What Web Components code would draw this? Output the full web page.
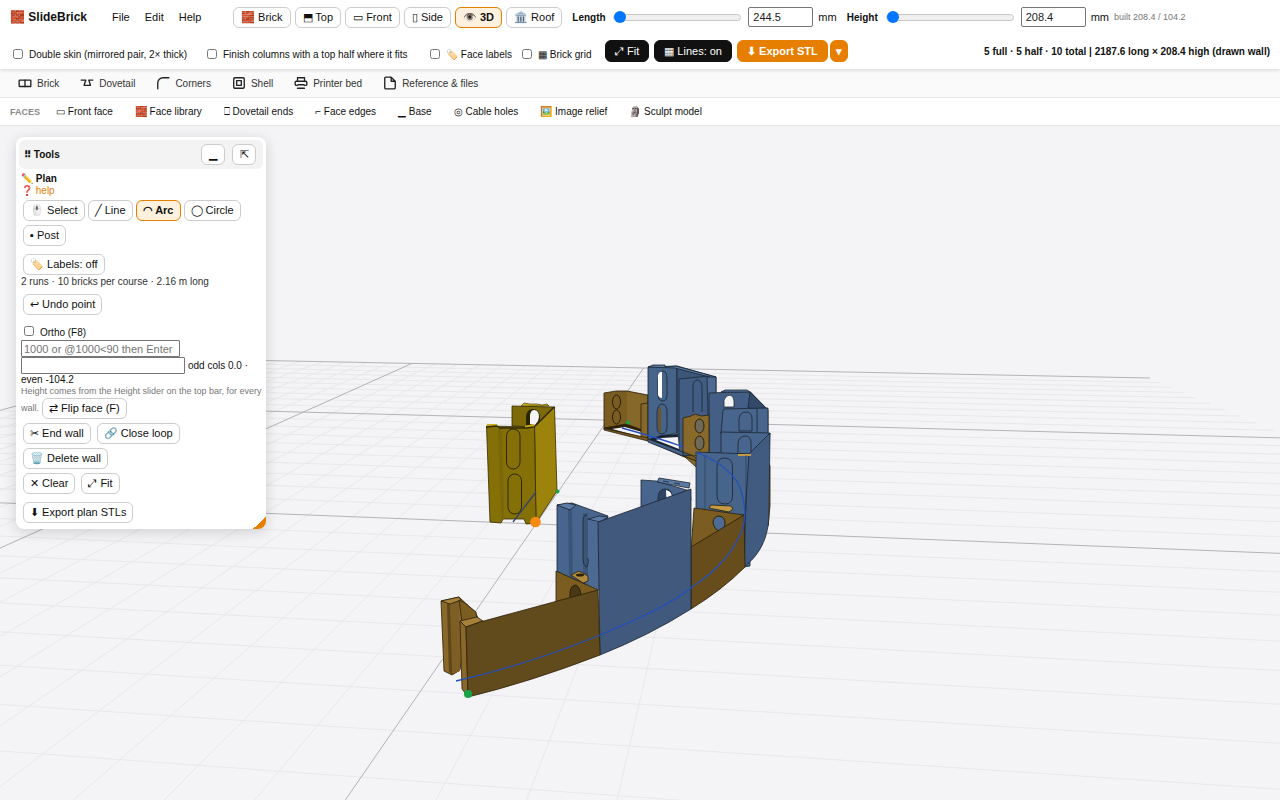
<!DOCTYPE html>
<html lang="en">
<head>
<meta charset="utf-8">
<title>SlideBrick</title>
<style>
  html, body { height: 100%; }
  body {
    margin: 0;
    font-family: "Liberation Sans", Arial, sans-serif;
    font-size: 10px;
    color: #111;
    background: #f4f4f6;
  }
</style>
</head>
<body>
<sb-app></sb-app>

<script>
const define = (name, html, setup) => {
  const template = document.createElement('template');
  template.innerHTML = html;
  customElements.define(name, class extends HTMLElement {
    constructor() {
      super();
      this.attachShadow({ mode: 'open' }).append(template.content.cloneNode(true));
    }
    connectedCallback() { if (setup) setup(this, this.shadowRoot); }
  });
};

/* Push button. Variants: active, dark, primary. */
define('sb-button', `
  <style>
    :host { display: inline-flex; flex: none; }
    button {
      font: inherit; font-size: 11px; line-height: 13px; color: #111;
      margin: 0; padding: 3px var(--button-pad, 7px); height: 21px;
      border: 1px solid #ccc; border-radius: 6px; background: #fff; white-space: pre;
      width: 100%;
    }
    :host([active]) button { border-color: #e67e00; background: #fff1de; font-weight: bold; }
    :host([dark]) button { height: 22px; padding: 3px 9px; border-color: #111; background: #111; color: #fff; }
    :host([primary]) button { height: 22px; padding: 3px 9px; border-color: #e67e00; background: #e67e00; color: #fff; font-weight: bold; }
    :host([slim]) button { padding: 3px 5px; }
  </style>
  <button type="button"><slot></slot></button>`);

/* Tick box with its label. */
define('sb-check', `
  <style>
    :host { display: inline-flex; flex: none; }
    label { display: flex; align-items: center; gap: 6px; line-height: 12px; white-space: pre; }
    input { width: 10px; height: 10px; margin: 0 0 3px; }
  </style>
  <label><input type="checkbox"><span><slot></slot></span></label>`);

/* Slider with a number box beside it. */
define('sb-measure', `
  <style>
    :host { display: flex; align-items: center; flex: none; }
    label { font-weight: bold; width: var(--label-width, 34px); }
    .range {
      appearance: none; -webkit-appearance: none; width: 128px; height: 12px;
      margin: 0 7px; background: none;
    }
    .range::-webkit-slider-runnable-track {
      height: 7px; box-sizing: border-box; border: 1px solid #c6c6c6; border-radius: 4px; background: #efefef;
    }
    .range::-webkit-slider-thumb {
      -webkit-appearance: none; width: 12px; height: 12px; margin-top: -4px;
      border-radius: 50%; background: #0075ff;
    }
    .value {
      font: inherit; font-size: 11px; color: #222; box-sizing: border-box;
      width: 65px; height: 20px; padding: 0 4px; margin: 0 5px 0 0;
      border: 1px solid #767676; border-radius: 2px; background: #fff;
    }
    .unit { font-size: 11px; }
  </style>
  <label for="range"></label>
  <input class="range" id="range" type="range" min="0" max="100" value="0">
  <input class="value" type="text">
  <span class="unit">mm</span>`,
  (host, root) => {
    const name = host.getAttribute('label');
    root.querySelector('label').textContent = name;
    root.querySelector('.value').value = host.getAttribute('value');
    root.querySelector('.value').setAttribute('aria-label', name + ' in mm');
  });

define('sb-topbar', `
  <style>
    :host {
      display: block; position: relative; z-index: 2; background: #fff;
      padding: 6px 10px 7px; box-shadow: 0 1px 4px rgba(0,0,0,.15);
    }
    .row { display: flex; align-items: center; }
    .row + .row { margin-top: 12px; }
    h1 { margin: 0; font-size: 12px; line-height: 22px; width: 102px; white-space: pre; }
    nav { display: flex; gap: 15px; width: 121px; font-size: 11px; }
    nav a { color: inherit; text-decoration: none; }
    .views { display: flex; gap: 4px; margin-right: 10px; }
    .built { margin-left: 5px; font-size: 9px; color: #777; }
    sb-measure + sb-measure { margin-left: 10px; }
    .checks { display: flex; margin: 8px 12px 0 3px; }
    .actions { display: flex; gap: 5px; }
    .split { display: flex; gap: 2px; }
    output { margin-left: auto; font-weight: bold; }
    .skin { width: 194px; } .finish { width: 223px; } .labels { width: 92px; } .grid { width: 71px; }
  </style>
  <div class="row">
    <h1>🧱 SlideBrick</h1>
    <nav><a href="#file">File</a><a href="#edit">Edit</a><a href="#help">Help</a></nav>
    <div class="views">
      <sb-button>🧱 Brick</sb-button>
      <sb-button>⬒ Top</sb-button>
      <sb-button>▭ Front</sb-button>
      <sb-button>▯ Side</sb-button>
      <sb-button active>👁️ 3D</sb-button>
      <sb-button>🏛️ Roof</sb-button>
    </div>
    <sb-measure label="Length" value="244.5"></sb-measure>
    <sb-measure label="Height" value="208.4" style="--label-width: 32px"></sb-measure>
    <span class="built">built 208.4 / 104.2</span>
  </div>
  <div class="row">
    <div class="checks">
      <sb-check class="skin">Double skin (mirrored pair, 2× thick)</sb-check>
      <sb-check class="finish">Finish columns with a top half where it fits</sb-check>
      <sb-check class="labels">🏷️ Face labels</sb-check>
      <sb-check class="grid">▦ Brick grid</sb-check>
    </div>
    <div class="actions">
      <sb-button dark>⤢ Fit</sb-button>
      <sb-button dark>▦ Lines: on</sb-button>
      <div class="split">
        <sb-button primary>⬇ Export STL</sb-button>
        <sb-button primary slim>▾</sb-button>
      </div>
    </div>
    <output>5 full · 5 half · 10 total | 2187.6 long × 208.4 high (drawn wall)</output>
  </div>`);

define('sb-tabs', `
  <style>
    :host { display: block; background: #fafafa; border-bottom: 1px solid #e6e6e6; }
    nav { display: flex; align-items: center; gap: 21px; height: 28px; padding: 0 18px; }
    a { display: flex; align-items: center; gap: 5px; color: #333; text-decoration: none; }
    svg { width: 14px; height: 14px; fill: none; stroke: #222; stroke-width: 2.3; stroke-linecap: round; stroke-linejoin: round; }
  </style>
  <nav>
    <a href="#brick"><svg viewBox="0 0 24 24"><rect x="2" y="7" width="20" height="11" rx="1"/><path d="M12 7v11"/></svg>Brick</a>
    <a href="#dovetail"><svg viewBox="0 0 24 24"><path d="M2 7h8l-3 9h6M22 7h-7l3 9h-5M2 7h3"/></svg>Dovetail</a>
    <a href="#corners"><svg viewBox="0 0 24 24"><path d="M3 22V12a9 9 0 0 1 9-9h10"/></svg>Corners</a>
    <a href="#shell"><svg viewBox="0 0 24 24"><rect x="3" y="3" width="18" height="18" rx="2"/><rect x="8" y="8" width="8" height="8"/></svg>Shell</a>
    <a href="#printer"><svg viewBox="0 0 24 24"><path d="M6 9V3h12v6M6 16H4a2 2 0 0 1-2-2v-3a2 2 0 0 1 2-2h16a2 2 0 0 1 2 2v3a2 2 0 0 1-2 2h-2M7 15h10M6 21h12"/></svg>Printer bed</a>
    <a href="#reference"><svg viewBox="0 0 24 24"><path d="M14 2H5a2 2 0 0 0-2 2v16a2 2 0 0 0 2 2h14a2 2 0 0 0 2-2V9zM14 2v7h7"/></svg>Reference &amp; files</a>
  </nav>`);

define('sb-faces', `
  <style>
    :host { display: block; background: #fff; border-bottom: 1px solid #e6e6e6; }
    nav { display: flex; align-items: center; gap: 22px; height: 27px; padding: 0 10px; }
    b { color: #888; font-size: 9px; margin-right: -6px; }
    a { color: #111; text-decoration: none; white-space: pre; }
  </style>
  <nav>
    <b>FACES</b>
    <a href="#front">▭ Front face</a>
    <a href="#library">🧱 Face library</a>
    <a href="#ends">⎕ Dovetail ends</a>
    <a href="#edges">⌐ Face edges</a>
    <a href="#base">▁ Base</a>
    <a href="#cable">◎ Cable holes</a>
    <a href="#relief">🖼️ Image relief</a>
    <a href="#sculpt">🗿 Sculpt model</a>
  </nav>`);

define('sb-tools', `
  <style>
    :host {
      display: block; box-sizing: border-box; width: 250px; padding: 3px 3px 6px; position: relative;
      background: #fff; border-radius: 8px; box-shadow: 0 3px 14px rgba(0,0,0,.15);
      --button-pad: 6px;
    }
    header { display: flex; align-items: center; gap: 7px; height: 29px; padding: 0 7px 0 5px; background: #f3f3f3; border-radius: 6px; }
    h2 { margin: 0 auto 0 0; font-size: 10px; }
    header sb-button { width: 24px; }
    .body { padding: 4px 2px 0; line-height: 11px; }
    h3 { margin: 0; font-size: 10px; line-height: 12px; }
    .help { color: #e67e00; text-decoration: none; display: block; line-height: 11px; }
    .row { display: flex; flex-wrap: wrap; gap: 4px 3px; padding: 0 2px; margin-top: 4px; }
    .wide { gap: 4px 6px; }
    .apart { margin-top: 8px; }
    .stat { margin: 1px 0 6px; line-height: 12px; color: #333; }
    .ortho { padding: 0 3px; margin: 11px 0 1px; display: flex; }
    .entry {
      display: block; box-sizing: border-box; font: inherit; font-size: 11px; line-height: 13px;
      height: 17px; width: 159px; padding: 0 2px; margin: 0; border: 1px solid #767676; border-radius: 1px; background: #fff;
    }
    .entry::placeholder { color: #757575; }
    .offset { display: flex; align-items: center; gap: 3px; }
    .offset .entry { width: 164px; }
    .even { line-height: 12px; }
    .note { margin: 0; font-size: 9px; line-height: 11px; color: #777; white-space: nowrap; }
    .flip { display: flex; align-items: center; gap: 3px; margin-top: 1px; font-size: 9px; color: #777; }
    .grip {
      position: absolute; right: 0; bottom: 0; width: 13px; height: 13px; border-bottom-right-radius: 8px;
      background: linear-gradient(135deg, transparent 50%, #e67e00 50%);
    }
  </style>
  <header>
    <h2>⠿ Tools</h2>
    <sb-button>▁</sb-button>
    <sb-button>⇱</sb-button>
  </header>
  <div class="body">
    <h3>✏️ Plan</h3>
    <a class="help" href="#help">❓ help</a>
    <div class="row">
      <sb-button>🖱️ Select</sb-button>
      <sb-button>╱ Line</sb-button>
      <sb-button active>◠ Arc</sb-button>
      <sb-button>◯ Circle</sb-button>
      <sb-button>▪ Post</sb-button>
    </div>
    <div class="row apart"><sb-button>🏷️ Labels: off</sb-button></div>
    <p class="stat">2 runs · 10 bricks per course · 2.16 m long</p>
    <div class="row"><sb-button>↩ Undo point</sb-button></div>
    <div class="ortho"><sb-check>Ortho (F8)</sb-check></div>
    <input class="entry" type="text" aria-label="Length and angle" placeholder="1000 or @1000&lt;90 then Enter">
    <div class="offset"><input class="entry" id="offset" type="text"><label for="offset">odd cols 0.0 ·</label></div>
    <div class="even">even -104.2</div>
    <p class="note">Height comes from the Height slider on the top bar, for every</p>
    <div class="flip">wall. <sb-button>⇄ Flip face (F)</sb-button></div>
    <div class="row wide">
      <sb-button>✂ End wall</sb-button>
      <sb-button>🔗 Close loop</sb-button>
    </div>
    <div class="row"><sb-button>🗑️ Delete wall</sb-button></div>
    <div class="row wide">
      <sb-button>✕ Clear</sb-button>
      <sb-button>⤢ Fit</sb-button>
    </div>
    <div class="row apart"><sb-button>⬇ Export plan STLs</sb-button></div>
  </div>
  <div class="grip"></div>`);

/* 3D view: ground grid in perspective, with the curved wall on it. */
define('sb-scene', `
  <style>
    :host { display: block; overflow: hidden; background: #f4f4f6; }
    svg { display: block; width: 100%; height: 100%; }
    .minor { stroke: #e8e8eb; fill: none; }
    .major { stroke: #b3b3b8; fill: none; }
    .e { stroke: #1b2430; stroke-width: .8; stroke-linejoin: round; }
    .n { stroke: #1b2430; stroke-width: .8; fill: none; }
    .y { stroke: #332b00; stroke-width: .8; }
    .o { stroke: #2a1f08; stroke-width: .8; }
  </style>
  <svg viewBox="0 126 1280 674" preserveAspectRatio="xMidYMid slice" role="img" aria-label="Curved wall in 3D">
    <g class="ground"></g>

    <!-- yellow brick -->
    <g stroke-linejoin="round">
      <path class="y" fill="#7d6a08" d="M512 406L555 407 536 427 512 426z"/>
      <path fill="#2c2600" d="M526 425V416q1-7 7-7 6 0 7 7v5l-4 5z"/>
      <path fill="#f4f4f6" d="M530 424V415q1-5 4-5 5 0 5 7l-1 4-3 4z"/>
      <path fill="#c9ae1b" stroke="#332b00" stroke-width=".6" d="M521 406l3-3 6 1h7l5 1 5-1 2 2z"/>
      <path class="y" fill="#9c830c" d="M534.500 427L554.500 407 557 491 536 523z"/>
      <path class="y" fill="#857008" d="M486.500 426L534.500 427 536 523 526 524 524 519 503 519 501 523 490 522z"/>
      <path fill="#7a6707" d="M498 427h4l2 92h-3z"/>
      <path fill="#c9ae1b" d="M487 424h10v3h-10zM525 426l8-2 3 2-3 2h-8z"/>
      <path fill="none" stroke="#332b00" stroke-width="1.300" d="M486 427l11-1 3 2h26l8-1 20-20"/>
      <g fill="none" stroke="#2c2600"><rect x="506.500" y="429" width="13.500" height="40" rx="6.700"/><rect x="508" y="474" width="13.500" height="40" rx="6.700"/></g>
      <path stroke="#33406e" stroke-width="1.300" d="M513 522L536 492"/>
    </g>

    <!-- far end of the wall -->
    <g>
      <path class="o" fill="#7b5d22" d="M604 393L616 391 627 391 648 395V438L625 426 604 429z"/>
      <path fill="#86682a" d="M627 392l20 4v37l-20-9z"/>
      <path class="o" fill="#2b210c" d="M604 428l22-4 22 8v8z"/>
      <path fill="#f4f4f6" d="M612 429l13-2 17 5v5z"/>
      <path class="o" fill="#86682a" d="M641 404l7-1v37l-7-2z"/>
      <path class="o" fill="#7b5d22" d="M604 428.500L648 438 683 452 698 458 700 463 682 456 648 441 604 430z"/>
      <g fill="none" stroke="#2a1f08"><ellipse cx="616.500" cy="402" rx="4" ry="7"/><ellipse cx="616.500" cy="417" rx="4" ry="7"/></g>
      <path class="e" fill="#46638a" d="M648 367L677 366V433L648 440z"/>
      <path class="e" fill="#3c567a" d="M677 366L716 377V452L683 456 677 433z"/>
      <path class="e" fill="#5b7ba5" d="M648 367l5-2h12v2l11-1 40 11-3 1-38-10z"/>
      <path class="e" fill="#425d83" d="M679 379l30-3v40l-28 38-2-4z"/>
      <path class="e" fill="#4c6a92" d="M707 377h9v70h-7z"/>
      <path class="n" d="M693 412v-25q0-7 4-7 5 0 5 7v25"/>
      <path class="n" d="M658 380q1-9 5-9 4 0 4 9v14q0 7-4 7-5 0-5-7zM657 412q1-8 5-8 5 0 5 8v14q0 8-5 8-5 0-5-8z"/>
      <path fill="#fff" d="M658 375q2-4 4-3v26q-3 0-4-3z"/>
      <path fill="#6d542a" d="M658 411q2-5 3-5v27q-3-1-3-6z"/>
      <path fill="#1b2430" d="M649 439l13-4 15-1 2 4v14z"/>
      <path fill="#f4f4f6" d="M656 440l6-2 16-1 1 12z"/>
      <path class="e" fill="#46638a" d="M648 439l35 13v4l-35-14z"/>
      <path class="e" fill="#435f86" d="M709 393L750 391.500 768 410V440L709 455z"/>
      <path class="e" fill="#33496a" d="M750 392l18 18-20-2z"/>
      <path class="e" fill="#5b7ba5" d="M721 392l4-2h22l3 2z"/>
      <path class="e" fill="#f4f4f6" d="M724 407V400q2-5 6-5 4 1 4 6v6z"/>
      <path class="e" fill="#48658d" d="M723 410l1-1 44-1v26h-47z"/>
      <path class="n" d="M739 431v-12q1-7 7-7 6 0 6 7v12zM757 409v24"/>
      <path class="e" fill="#48658d" d="M721 432l49 1-2 23h-47z"/>
      <path class="n" d="M738 454v-11q1-7 7-7 6 0 6 7v11z"/>
      <path class="o" fill="#8a6a2b" d="M683 418l8-2 4-2 6 2 8-1v37l-15 4-11-4z"/>
      <g stroke="#2a1f08" fill="#6d6a5a"><ellipse cx="699.500" cy="426" rx="4.500" ry="7"/><ellipse cx="699.500" cy="443" rx="4.500" ry="7"/></g>
      <path class="o" fill="#86682a" d="M684 456l24 10-12 1z"/>
      <path fill="#86682a" stroke="#5a431a" d="M769 464l1 2v40l-2 20z"/>
      <path class="e" fill="#47648b" d="M696 452L751 454 750 566 744 567 696 540z"/>
      <path class="e" fill="#405a80" d="M749 454L770 433 769 512C769 540 758 556 744 567L746 500z"/>
      <path fill="#c49b45" d="M738 454h13v2h-13z"/>
      <path class="n" d="M717 467q0-9 7.500-9 8 0 8 9v29q0 8-7.500 8-7.500 0-8-8z"/>
      <path class="n" stroke-opacity=".5" d="M705 455v60M746 455v55"/>
    </g>

    <!-- near end of the wall -->
    <g>
      <path class="o" fill="#7b5d22" d="M694 508L744 515 691 551z"/>
      <path class="o" fill="#c49b45" d="M709 508l2-3 20 1 2 3-4 3z"/>
      <path fill="#4d6b94" stroke="#2a1f08" d="M713 522q1-6 6-6 6 1 6 7t-5 8q-6-1-7-9z"/>
      <path class="o" fill="#674d1c" d="M691 547L744 515 745 567Q722 590 691 609z"/>
      <path class="e" fill="#48658d" d="M641 480L656 481 690 491 691 500 641 512z"/>
      <path class="e" fill="#5b7ba5" d="M657 482l2-4 31 5-1 5z"/>
      <path class="n" d="M663 481l6 1M674 483l6 1"/>
      <path class="e" fill="#304563" d="M658 503v-6q1-8 7-8 7 0 7 8l-2 4z"/>
      <path fill="#fff" d="M666 490q6 1 6 8l-5 3q-1-5-1-11z"/>
      <path class="e" fill="#48658d" d="M557 505L572 503 608 516 600 590 557 572z"/>
      <path fill="#3b5578" d="M568 508l4-1 1 75-4-4zM583 513h5v64h-5z"/>
      <path fill="#5b7ba5" class="e" d="M557 505l10-2 9 2-6 5zM588 519l11-3 9 1-8 5z"/>
      <path fill="#4c6a92" d="M588 520l11 2v68l-11-5z"/>
      <path class="n" d="M583 560V520q0-5 4-5M583 560q1 7 4 7 2-4 1-9"/>
      <path class="o" fill="#7b5d22" d="M556 571L598 590 595 594 556 604z"/>
      <path class="o" fill="#b08a3d" d="M571 575l8-4 9 5v5l-5 2z"/>
      <ellipse cx="580" cy="575" rx="4" ry="1.500" fill="#2a1f08"/>
      <path fill="#4a3815" stroke="#2a1f08" d="M570 600v-8q1-7 6-7 5 3 5 12z"/>
      <path class="e" fill="#40597c" d="M598 522L691 489 691 609Q650 635 600 655z"/>
      <path class="o" fill="#8a6829" d="M441 601L459 597 475 612 478 618 466 628 460 670 452 675 444 671z"/>
      <path fill="#5e4619" d="M447 604l12-3v70l-7 4-3-3z"/>
      <path fill="#7d5f25" d="M450 604l9-3 1 70-8 3z"/>
      <path class="o" fill="#a78139" d="M441 601l18-4 2 3-11 4z"/>
      <path class="o" fill="#7b5d22" d="M459 600l6 3 11 9 1 6-15 4z"/>
      <path class="o" fill="#a78139" d="M460 621l17-4 6 4-17 6z"/>
      <path class="o" fill="#8a6829" d="M460 621L466 627 468 697 462 689z"/>
      <path class="o" fill="#614a1c" d="M466 627L480 622 598 590 600 655Q530 682 468 697z"/>
      <path fill="none" stroke="#2450b8" stroke-width="1.300" d="M456 681Q530 664 600 635T692 587Q730 562 742 530 749 508 738 483 724 462 695 452M684 447Q655 437 622 428"/>
    </g>
    <circle cx="468" cy="694" r="4" fill="#17a34a"/>
    <circle cx="557.500" cy="491.500" r="2" fill="#17a34a"/>
    <circle cx="628" cy="422.500" r="2" fill="#17a34a"/>
    <circle cx="535.500" cy="522" r="5.300" fill="#f78b12"/>
  </svg>`,
  (host, root) => {
    // Ground plane point (u, v) to view: two vanishing points and the middle of the far edge.
    const project = (u, v) => {
      const a = -0.02919 * u, b = -0.2492 * v, w = 1 + a + b;
      return [(643.6 - 7521 * a + 752 * b) / w, (368 + 206 * a + 211 * b) / w].map(n => n.toFixed(1)).join(' ');
    };
    const near = 3.3;
    let minor = '', major = '';
    for (let i = 0; i <= 30; i++) {
      const d = `M${project(-2, i / 10)}L${project(2, i / 10)}`;
      if (i % 10) minor += d; else major += d;
    }
    for (let i = -20; i <= 3; i++) {
      const d = `M${project(i / 10, 0)}L${project(i / 10, near)}`;
      if (i % 10) minor += d; else major += d;
    }
    root.querySelector('.ground').innerHTML = `<path class="minor" d="${minor}"/><path class="major" d="${major}"/>`;
  });

define('sb-app', `
  <style>
    :host { display: flex; flex-direction: column; min-height: 100%; }
    main { flex: 1; display: grid; }
    sb-scene, .overlay { grid-area: 1 / 1; }
    sb-scene { height: 0; min-height: 100%; }
    .overlay { padding: 11px 16px 16px; z-index: 1; justify-self: start; }
  </style>
  <sb-topbar></sb-topbar>
  <sb-tabs></sb-tabs>
  <sb-faces></sb-faces>
  <main>
    <sb-scene></sb-scene>
    <div class="overlay"><sb-tools></sb-tools></div>
  </main>`);
</script>
</body>
</html>
